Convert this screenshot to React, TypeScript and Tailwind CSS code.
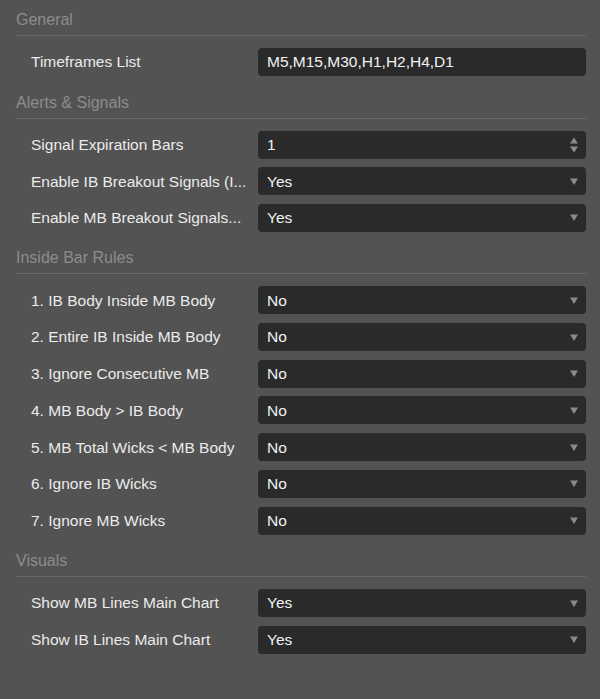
import React from 'react'

type Field =
  | { label: string; kind: 'text'; value: string }
  | { label: string; kind: 'number'; value: string }
  | { label: string; kind: 'select'; value: string }

interface Section {
  title: string
  fields: Field[]
}

const sections: Section[] = [
  {
    title: 'General',
    fields: [{ label: 'Timeframes List', kind: 'text', value: 'M5,M15,M30,H1,H2,H4,D1' }],
  },
  {
    title: 'Alerts & Signals',
    fields: [
      { label: 'Signal Expiration Bars', kind: 'number', value: '1' },
      { label: 'Enable IB Breakout Signals (I...', kind: 'select', value: 'Yes' },
      { label: 'Enable MB Breakout Signals...', kind: 'select', value: 'Yes' },
    ],
  },
  {
    title: 'Inside Bar Rules',
    fields: [
      { label: '1. IB Body Inside MB Body', kind: 'select', value: 'No' },
      { label: '2. Entire IB Inside MB Body', kind: 'select', value: 'No' },
      { label: '3. Ignore Consecutive MB', kind: 'select', value: 'No' },
      { label: '4. MB Body > IB Body', kind: 'select', value: 'No' },
      { label: '5. MB Total Wicks < MB Body', kind: 'select', value: 'No' },
      { label: '6. Ignore IB Wicks', kind: 'select', value: 'No' },
      { label: '7. Ignore MB Wicks', kind: 'select', value: 'No' },
    ],
  },
  {
    title: 'Visuals',
    fields: [
      { label: 'Show MB Lines Main Chart', kind: 'select', value: 'Yes' },
      { label: 'Show IB Lines Main Chart', kind: 'select', value: 'Yes' },
    ],
  },
]

export default function App() {
  return (
    <div
      className="min-h-[699px] w-[600px] bg-[#535353] pl-[16px] pr-[14px]"
      style={{ fontFamily: '"Liberation Sans", Arial, sans-serif' }}
    >
      {sections.map((s, i) => (
        <div key={s.title} className={i === 0 ? '' : 'mt-[6.5px]'}>
          {/* SECTION HEADER */}
          <div className="pt-[12px] pb-[7px] border-b border-[#686868]">
            <p className="text-[16px] leading-[16px] text-[#8c8c8c]">{s.title}</p>
          </div>

          {/* ROWS */}
          <div className="pt-[12px] flex flex-col gap-[8.7px]">
            {s.fields.map(f => (
              <FieldRow key={f.label} field={f} />
            ))}
          </div>
        </div>
      ))}
    </div>
  )
}

/* ---------------- COMPONENTS ---------------- */

function FieldRow({ field }: { field: Field }) {
  return (
    <div className="flex items-center h-[28px] pl-[15px]">
      <div className="w-[227px] shrink-0 whitespace-nowrap overflow-hidden text-[15.5px] text-[#ebebeb]">
        {field.label}
      </div>
      <div className="flex-1 h-full rounded-[4px] bg-[#2a2a2a] flex items-center pl-[9px] pr-[8px] text-[15.5px] text-[#f2f2f2]">
        <span className="flex-1">{field.value}</span>
        {field.kind === 'select' && <DownArrow />}
        {field.kind === 'number' && <Spinner />}
      </div>
    </div>
  )
}

function DownArrow() {
  return (
    <svg width="8" height="7" viewBox="0 0 8 7">
      <path d="M0 0.5 L8 0.5 L4 7 Z" fill="#8a8a8a" />
    </svg>
  )
}

function Spinner() {
  return (
    <svg width="8" height="16" viewBox="0 0 8 16">
      <path d="M4 0.5 L8 6.5 L0 6.5 Z" fill="#8a8a8a" />
      <path d="M0 9.5 L8 9.5 L4 15.5 Z" fill="#8a8a8a" />
    </svg>
  )
}
